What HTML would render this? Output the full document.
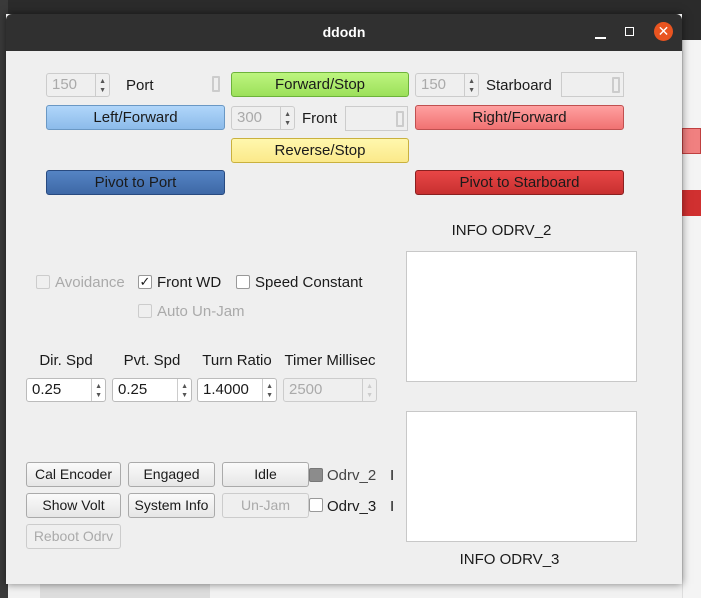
<!DOCTYPE html>
<html><head><style>
*{box-sizing:border-box;margin:0;padding:0}
body{width:701px;height:598px;overflow:hidden;background:#f2f2f2;font-family:"Liberation Sans","DejaVu Sans",sans-serif;font-size:15px;color:#1a1a1a;position:relative}
.a{position:absolute}
.win{left:6px;top:14px;width:676px;height:570px;background:#efefef;box-shadow:0 0 8px rgba(0,0,0,.5)}
.title{left:6px;top:14px;width:676px;height:37px;background:#303030;border-radius:6px 6px 0 0;color:#fff;font-weight:bold;text-align:center;line-height:36px;font-size:14px}
.btn{position:absolute;border:1px solid #aaa;border-radius:3px;text-align:center;line-height:23px;height:25px;background:linear-gradient(#fafafa,#e6e6e6);white-space:nowrap}
.spin{position:absolute;height:24px;border:1px solid #bbb;border-radius:3px;background:#fff;padding-left:5px;line-height:22px}
.spin.d{background:#efefef;color:#aaa;border-color:#ccc}
.spin::after{content:"";position:absolute;right:0;top:0;width:13px;height:100%;border-left:1px solid #ccc}
.ar{position:absolute;right:3px;font-size:7px;color:#555;line-height:7px}
.cb{position:absolute;width:14px;height:14px;border:1px solid #999;background:#fff;border-radius:2px}
.lcd{position:absolute;border:1px solid #ccc;background:#efefef}
.lcd i{position:absolute;right:3px;top:4px;width:8px;height:16px;border:2px solid #ccc;border-radius:1px}
.box{position:absolute;background:#fff;border:1px solid #c8c8c8}
.dis{color:#aaa}
</style></head><body>
<div class="a" style="left:0;top:0;width:701px;height:40px;background:#2b2b2b"></div>
<div class="a" style="left:0;top:0;width:8px;height:598px;background:#3a3a3a"></div>
<div class="a" style="left:682px;top:40px;width:19px;height:558px;background:#f4f4f4;border-left:1px solid #ddd"></div>
<div class="a" style="left:682px;top:128px;width:19px;height:26px;background:#f08080;border:1px solid #c04040"></div>
<div class="a" style="left:682px;top:190px;width:19px;height:26px;background:#d03030"></div>
<div class="a" style="left:40px;top:580px;width:170px;height:18px;background:#ddd"></div>
<div class="a win"></div>
<div class="a title">ddodn</div>
<div class="a" style="left:595px;top:37px;width:11px;height:1.5px;background:#fff"></div>
<div class="a" style="left:625px;top:27px;width:9px;height:9px;border:1.5px solid #fff"></div>
<div class="a" style="left:654px;top:22px;width:19px;height:19px;border-radius:50%;background:#e95420;color:#fff;text-align:center;line-height:19px;font-size:14px">✕</div>

<div class="spin d" style="left:46px;top:73px;width:64px">150<span class="ar" style="top:4px">▲</span><span class="ar" style="top:13px">▼</span></div>
<div class="a" style="left:126px;top:77px">Port</div>
<div class="lcd" style="left:208px;top:72px;width:14px;height:25px;border:none"><i style="right:2px"></i></div>
<div class="btn" style="left:231px;top:72px;width:178px;background:linear-gradient(#bdf57f,#9ce05a);border-color:#6db33a">Forward/Stop</div>
<div class="spin d" style="left:415px;top:73px;width:64px">150<span class="ar" style="top:4px">▲</span><span class="ar" style="top:13px">▼</span></div>
<div class="a" style="left:486px;top:77px">Starboard</div>
<div class="lcd" style="left:561px;top:72px;width:63px;height:25px"><i></i></div>

<div class="btn" style="left:46px;top:105px;width:179px;background:linear-gradient(#b0d6fa,#8cbbea);border-color:#6a98c4">Left/Forward</div>
<div class="spin d" style="left:231px;top:106px;width:64px">300<span class="ar" style="top:4px">▲</span><span class="ar" style="top:13px">▼</span></div>
<div class="a" style="left:302px;top:110px">Front</div>
<div class="lcd" style="left:345px;top:106px;width:63px;height:25px"><i></i></div>
<div class="btn" style="left:415px;top:105px;width:209px;background:linear-gradient(#ffa0a0,#f07272);border-color:#c05050">Right/Forward</div>

<div class="btn" style="left:231px;top:138px;width:178px;background:linear-gradient(#fff7ad,#fbe98a);border-color:#c9b13e">Reverse/Stop</div>
<div class="btn" style="left:46px;top:170px;width:179px;background:linear-gradient(#5584c4,#3e68a6);border-color:#284a80">Pivot to Port</div>
<div class="btn" style="left:415px;top:170px;width:209px;background:linear-gradient(#e84646,#c83030);border-color:#8a2020">Pivot to Starboard</div>

<div class="a" style="left:406px;top:222px;width:191px;text-align:center">INFO ODRV_2</div>
<div class="box" style="left:406px;top:251px;width:231px;height:131px"></div>
<div class="box" style="left:406px;top:411px;width:231px;height:131px"></div>
<div class="a" style="left:406px;top:551px;width:207px;text-align:center">INFO ODRV_3</div>

<div class="cb" style="left:36px;top:275px;border-color:#ccc;background:#efefef"></div><div class="a dis" style="left:55px;top:274px">Avoidance</div>
<div class="cb" style="left:138px;top:275px;font-size:13px;line-height:12px;text-align:center">✓</div><div class="a" style="left:157px;top:274px">Front WD</div>
<div class="cb" style="left:236px;top:275px"></div><div class="a" style="left:255px;top:274px">Speed Constant</div>
<div class="cb" style="left:138px;top:304px;border-color:#ccc;background:#efefef"></div><div class="a dis" style="left:157px;top:303px">Auto Un-Jam</div>

<div class="a" style="left:26px;top:352px;width:80px;text-align:center">Dir. Spd</div>
<div class="a" style="left:112px;top:352px;width:80px;text-align:center">Pvt. Spd</div>
<div class="a" style="left:197px;top:352px;width:80px;text-align:center">Turn Ratio</div>
<div class="a" style="left:275px;top:352px;width:110px;text-align:center">Timer Millisec</div>
<div class="spin" style="left:26px;top:378px;width:80px">0.25<span class="ar" style="top:4px">▲</span><span class="ar" style="top:13px">▼</span></div>
<div class="spin" style="left:112px;top:378px;width:80px">0.25<span class="ar" style="top:4px">▲</span><span class="ar" style="top:13px">▼</span></div>
<div class="spin" style="left:197px;top:378px;width:80px">1.4000<span class="ar" style="top:4px">▲</span><span class="ar" style="top:13px">▼</span></div>
<div class="spin d" style="left:283px;top:378px;width:94px">2500<span class="ar" style="top:4px;color:#ccc">▲</span><span class="ar" style="top:13px;color:#ccc">▼</span></div>

<div class="btn" style="left:26px;top:462px;width:95px;font-size:14px">Cal Encoder</div>
<div class="btn" style="left:128px;top:462px;width:87px;font-size:14px">Engaged</div>
<div class="btn" style="left:222px;top:462px;width:87px;font-size:14px">Idle</div>
<div class="cb" style="left:309px;top:468px;background:#8c8c8c;border-color:#777"></div><div class="a" style="left:327px;top:467px;color:#444">Odrv_2</div>
<div class="a" style="left:390px;top:467px">I</div>
<div class="btn" style="left:26px;top:493px;width:95px;font-size:14px">Show Volt</div>
<div class="btn" style="left:128px;top:493px;width:87px;font-size:14px">System Info</div>
<div class="btn dis" style="left:222px;top:493px;width:87px;border-color:#ccc;background:#efefef;font-size:14px">Un-Jam</div>
<div class="cb" style="left:309px;top:498px"></div><div class="a" style="left:327px;top:498px">Odrv_3</div>
<div class="a" style="left:390px;top:498px">I</div>
<div class="btn dis" style="left:26px;top:524px;width:95px;border-color:#ccc;background:#efefef;font-size:14px">Reboot Odrv</div>
</body></html>
